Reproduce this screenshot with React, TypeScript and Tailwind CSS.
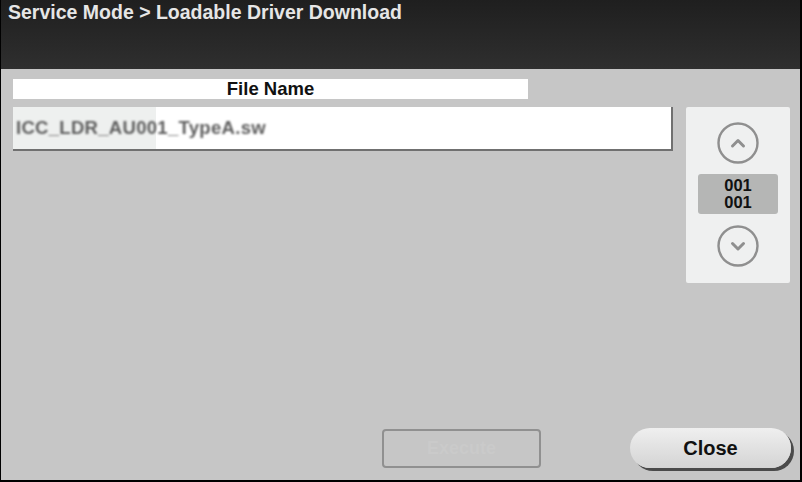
import React from 'react';

const font = { fontFamily: '"Liberation Sans", Arial, sans-serif' };

const Chevron: React.FC<{ dir: 'up' | 'down' }> = ({ dir }) => (
    <svg width="42" height="42" viewBox="0 0 42 42">
        <circle cx="21" cy="21" r="19.5" fill="none" stroke="#8f8f8f" strokeWidth="2.4" />
        <path
            d={dir === 'up' ? 'M15.5 24 L21 18.5 L26.5 24' : 'M15.5 18.5 L21 24 L26.5 18.5'}
            fill="none"
            stroke="#8f8f8f"
            strokeWidth="3"
            strokeLinecap="round"
            strokeLinejoin="round"
        />
    </svg>
);

export default function App() {
    return (
        <div
            className="w-[802px] h-[482px] flex flex-col bg-[#c6c6c6] border-l border-r-2 border-b-2 border-black overflow-hidden"
            style={font}
        >
            {/* Header */}
            <div className="h-[69px] shrink-0 bg-gradient-to-b from-[#1f1f1f] to-[#2f2f2f] pl-[7px]">
                <h1 className="text-[19.5px] font-bold text-[#e6e6e6] leading-[24px]">
                    Service Mode &gt; Loadable Driver Download
                </h1>
            </div>

            {/* Body */}
            <div className="flex-1 flex flex-col pl-[12px] pt-[10px]">
                <div className="flex">
                    <div className="flex flex-col">
                        <div className="w-[515px] h-[20px] bg-white flex items-center justify-center text-[18.5px] font-bold text-[#111] leading-none">
                            File Name
                        </div>
                        <div className="mt-[8px] w-[660px] h-[44px] bg-white border-r-2 border-b-2 border-[#707070] flex items-center">
                            <div className="h-full w-[143px] bg-[#eef0ef]" />
                            <span className="-ml-[140px] text-[18.5px] font-bold text-[#5e5e5e] blur-[1.2px] tracking-[0.3px]">
                                ICC_LDR_AU001_TypeA.sw
                            </span>
                        </div>
                    </div>

                    {/* Pager */}
                    <div className="ml-[13px] mt-[28px] w-[104px] h-[176px] bg-[#eff0f0] rounded-[2px] flex flex-col items-center pt-[15px]">
                        <Chevron dir="up" />
                        <div className="mt-[10px] mb-[11px] w-[80px] h-[40px] bg-[#b5b6b5] rounded-[3px] flex flex-col items-center justify-center text-[16.5px] font-bold text-[#111] leading-[17px]">
                            <span>001</span>
                            <span>001</span>
                        </div>
                        <Chevron dir="down" />
                    </div>
                </div>

                {/* Footer buttons */}
                <div className="mt-auto mb-[12px] flex items-center">
                    <div className="ml-[369px] w-[159px] h-[39px] border-[2.5px] border-[#909090] rounded-[4px] flex items-center justify-center text-[18px] font-bold text-[#cacaca]">
                        Execute
                    </div>
                    <button className="ml-[89px] w-[161px] h-[40px] rounded-full bg-gradient-to-b from-[#efefef] to-[#d4d4d4] shadow-[3px_3px_0_#4a4a4a] flex items-center justify-center text-[20px] font-bold text-[#111]">
                        Close
                    </button>
                </div>
            </div>
        </div>
    );
}
